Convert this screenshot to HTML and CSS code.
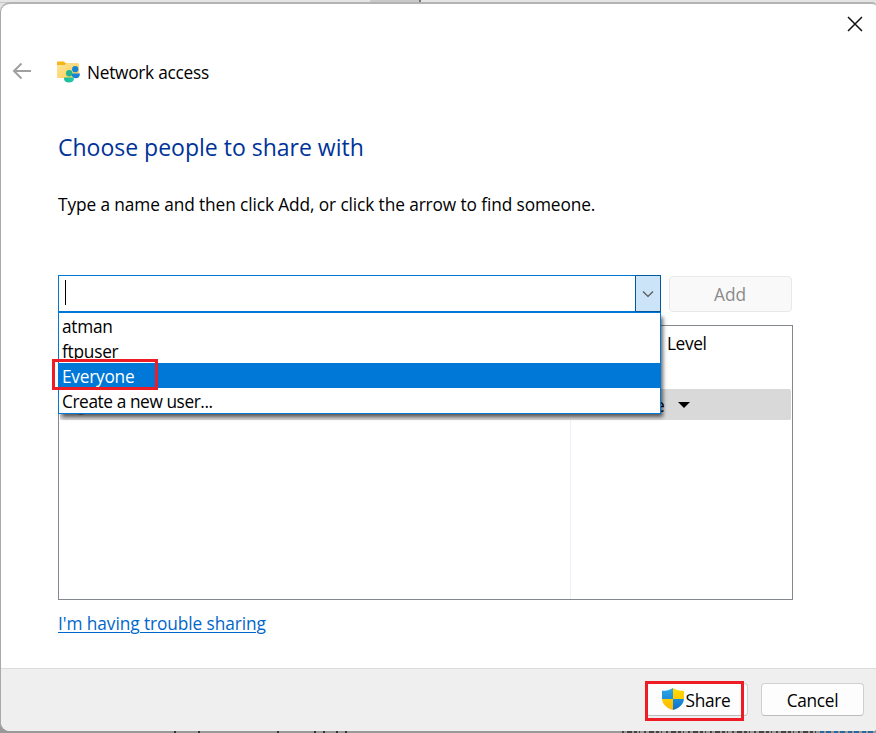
FILE: index.html
```html
<!DOCTYPE html>
<html lang="en">
<head>
<meta charset="utf-8">
<title>Network access</title>
<link rel="stylesheet" href="styles.css">
</head>
<body>
<svg class="backdrop" viewBox="0 0 876 733" aria-hidden="true">
  <path fill="#c9c9c9" d="M0 0h420v3H0z"/>
  <path fill="#e3e5e7" d="M0 0h370v2H0z"/>
  <path fill="#777" d="M121 2h28v2h-28zM419 0h2v4h-2z"/>
  <path fill="#333" d="M174 731h2v2h-2zM198 731h2v2h-2zM277 731h2v2h-2zM314 731h2v2h-2zM323 731h2v2h-2zM336 731h2v2h-2zM345 731h2v2h-2z"/>
  <path stroke="#444" stroke-width="2" stroke-dasharray="2 3 5 2 3 2 1 4" d="M622 732h196"/>
  <path stroke="#286a9d" stroke-width="2" stroke-dasharray="4 2 5 3" d="M820 732h56"/>
</svg>
<main class="dialog">
  <header class="titlebar">
    <svg class="close" viewBox="0 0 16 16"><path d="M1 1l14 14M15 1L1 15"/></svg>
  </header>
  <div class="nav">
    <svg class="back" viewBox="0 0 20 18"><path d="M19 9H2M9.500 1.500L2 9l7.500 7.500"/></svg>
    <svg class="folder" viewBox="0 0 24 22">
      <defs>
        <linearGradient id="fold" x1="0" y1="0" x2="1" y2="1"><stop stop-color="#ffe59a"/><stop offset="1" stop-color="#fbcb4e"/></linearGradient>
        <linearGradient id="teal"><stop stop-color="#17b890"/><stop offset="1" stop-color="#27c9b5"/></linearGradient>
      </defs>
      <path fill="#f5b617" d="M0 1.500Q0 .5 1 .5h6l2 2h12q1 0 1 1V8H0z"/>
      <path fill="url(#fold)" d="M0 4h7.500L9 3h13v13q0 1-1 1H1q-1 0-1-1z"/>
      <circle cx="18.200" cy="8.200" r="3.100" fill="#1683d8"/>
      <path fill="#1683d8" d="M14.500 12.500H23c0 3-1.500 4.700-4.700 4.700-2.500 0-3.800-2-3.800-4.700z"/>
      <circle cx="12.200" cy="12.200" r="3.200" fill="#1eb593"/>
      <path fill="url(#teal)" d="M7 17.500q0-1 1-1h8q1 0 1 1c0 2.500-2 4-5 4s-5-1.500-5-4z"/>
    </svg>
    <span class="nav-title">Network access</span>
  </div>
  <section class="content">
    <h1>Choose people to share with</h1>
    <p class="hint">Type a name and then click Add, or click the arrow to find someone.</p>
    <div class="entry">
      <div class="combo">
        <div class="field"><span class="caret"></span></div>
        <div class="drop"><svg viewBox="0 0 12 8"><path d="M1 1.500l5 5 5-5"/></svg></div>
        <ul class="menu">
          <li>atman</li>
          <li>ftpuser</li>
          <li class="selected">Everyone</li>
          <li class="create">Create a new user...</li>
        </ul>
        <span class="mark mark-option"></span>
      </div>
      <button class="btn add" disabled>Add</button>
    </div>
    <div class="people">
      <div class="people-head"><span>Level</span></div>
      <div class="people-row"><span class="avatar"></span><span class="tail">e</span><svg class="tri" viewBox="0 0 12 6"><path d="M0 0h12L6 6z"/></svg></div>
      <div class="people-rest"></div>
    </div>
    <a class="trouble">I'm having trouble sharing</a>
  </section>
  <footer class="actions">
    <div class="share-wrap">
      <button class="btn share">
        <svg viewBox="0 0 22 22">
          <defs>
            <clipPath id="shield"><path d="M11 0c3 2.200 6.500 2.800 11 2.800V10c0 6-4.500 10-11 12C4.500 20 0 16 0 10V2.800C4.500 2.800 8 2.200 11 0z"/></clipPath>
            <linearGradient id="blue" x1="0" y1="0" x2="0" y2="1"><stop stop-color="#2aabe8"/><stop offset="1" stop-color="#0f6fca"/></linearGradient>
            <linearGradient id="gold" x1="0" y1="0" x2="0" y2="1"><stop stop-color="#ffdc00"/><stop offset="1" stop-color="#fbb900"/></linearGradient>
          </defs>
          <g clip-path="url(#shield)"><path fill="url(#blue)" d="M0 0h11v11h11v11H11V11H0z"/><path fill="url(#gold)" d="M11 0h11v11H11v11H0V11h11z"/></g>
        </svg>
        <span>Share</span>
      </button>
      <span class="mark mark-share"></span>
    </div>
    <button class="btn cancel"><span>Cancel</span></button>
  </footer>
</main>
</body>
</html>
```
FILE: styles.css
```css
* { box-sizing: border-box; }
body {
  margin: 0;
  height: 733px;
  padding-top: 2px;
  overflow: hidden;
  background: linear-gradient(#e4e4e4 0 20px, #999 60px);
  color: #000;
  font: 17.3px/25px "Open Sans", "Noto Sans", sans-serif;
}
.backdrop { position: absolute; inset: 0; width: 876px; height: 733px; }
.dialog {
  position: relative;
  display: flex;
  flex-direction: column;
  height: 731px;
  border: 1px solid #a9a9a9;
  border-top: 2px solid #b3b3b3;
  border-right: 0;
  border-bottom: 2px solid transparent;
  background: #fff;
  background-clip: padding-box;
  border-radius: 10px 4px 4px 10px;
}
.titlebar { display: flex; justify-content: flex-end; height: 48px; padding: 12px 13px 0 0; }
.close { width: 16px; height: 16px; fill: none; stroke: #111; stroke-width: 1.500; }
.nav { display: flex; align-items: center; height: 39px; padding-left: 11px; }
.back { width: 20px; height: 18px; margin-top: -1px; fill: none; stroke: #a0a0a0; stroke-width: 2; }
.folder { width: 24px; height: 22px; margin-left: 25px; }
.nav-title { margin: 1px 0 0 6px; white-space: nowrap; letter-spacing: -0.27px; }
.content { display: flex; flex-direction: column; align-items: flex-start; padding: 39px 0 0 57px; height: 577px; }
h1 { margin: 0; height: 34px; font-size: 23px; line-height: 34px; font-weight: 400; color: #003399; white-space: nowrap; }
.hint { margin: 28px 0 0; white-space: nowrap; letter-spacing: -0.105px; }
.entry { display: flex; margin-top: 58px; height: 37px; }
.combo { position: relative; z-index: 2; display: flex; width: 603px; height: 37px; border: 1px solid #0078d7; }
.field { flex: 1; padding: 4px 0 0 6px; }
.caret { display: block; width: 1px; height: 25px; background: #000; }
.drop { display: flex; align-items: center; justify-content: center; width: 26px; margin: -1px; height: 37px; border: 1px solid #005a9e; background: #cce4f7; }
.drop svg { width: 12px; height: 8px; margin-right: 1px; fill: none; stroke: #555; stroke-width: 1.200; }
.menu {
  position: absolute;
  left: -1px;
  top: 36px;
  width: 603px;
  height: 102px;
  margin: 0;
  padding: 0;
  list-style: none;
  background: #fff;
  border: 1px solid #0078d7;
  box-shadow: 3px 4px 4px -1px rgba(0,0,0,.6);
}
.menu li { height: 25px; line-height: 27px; padding-left: 3px; white-space: nowrap; letter-spacing: -0.25px; }
.menu .selected { background: #0078d7; color: #fff; }
.menu .create { letter-spacing: -0.42px; }
.mark { position: absolute; border: 3px solid #ee1c25; }
.mark-option { left: -7px; top: 83px; width: 106px; height: 31px; }
.btn {
  display: flex;
  align-items: center;
  justify-content: center;
  padding: 0;
  font: inherit;
  color: #000;
  background: #fdfdfd;
  border: 1px solid #d0d0d0;
  border-bottom-color: #bcbcbc;
  border-radius: 4px;
}
.add { width: 123px; height: 36px; margin: 1px 0 0 8px; padding-right: 1px; color: #8b8b8b; background: #f9f9f9; border-color: #e8e8e8; }
.people { width: 735px; height: 275px; margin-top: 13px; padding: 0 1px; border: 1px solid #828790; display: flex; flex-direction: column; }
.people-head { height: 63px; padding: 5px 0 0 607px; letter-spacing: -0.4px; }
.people-row { display: flex; align-items: center; height: 31px; background: #d9d9d9; border-radius: 2px; }
.avatar { width: 20px; height: 20px; margin: 0 0 0 11px; border-radius: 50%; background: #667b91; }
.tail { margin: 1px 0 0 564px; }
.tri { width: 12px; height: 6px; margin-left: 13px; }
.people-rest { flex: 1; width: 511px; border-right: 1px solid #e9f2fa; }
.trouble { margin-top: 11px; line-height: 25px; letter-spacing: -0.08px; color: #0066cc; text-decoration: underline; text-underline-offset: 2px; text-decoration-thickness: 1px; white-space: nowrap; }
.actions {
  display: flex;
  flex: 1;
  justify-content: flex-end;
  gap: 13px;
  padding: 14px 12px 0 0;
  background: #efefef;
  border-top: 1px solid #dcdcdc;
  border-radius: 0 0 3px 9px;
}
.actions .btn span { margin-top: 2px; letter-spacing: -0.3px; }
.share-wrap { position: relative; }
.share { width: 102px; height: 33px; gap: 2px; padding-right: 2px; }
.share svg { width: 22px; height: 22px; margin-top: -1px; }
.mark-share { left: -1px; top: -2px; width: 99px; height: 40px; }
.cancel { width: 103px; height: 33px; }
```
